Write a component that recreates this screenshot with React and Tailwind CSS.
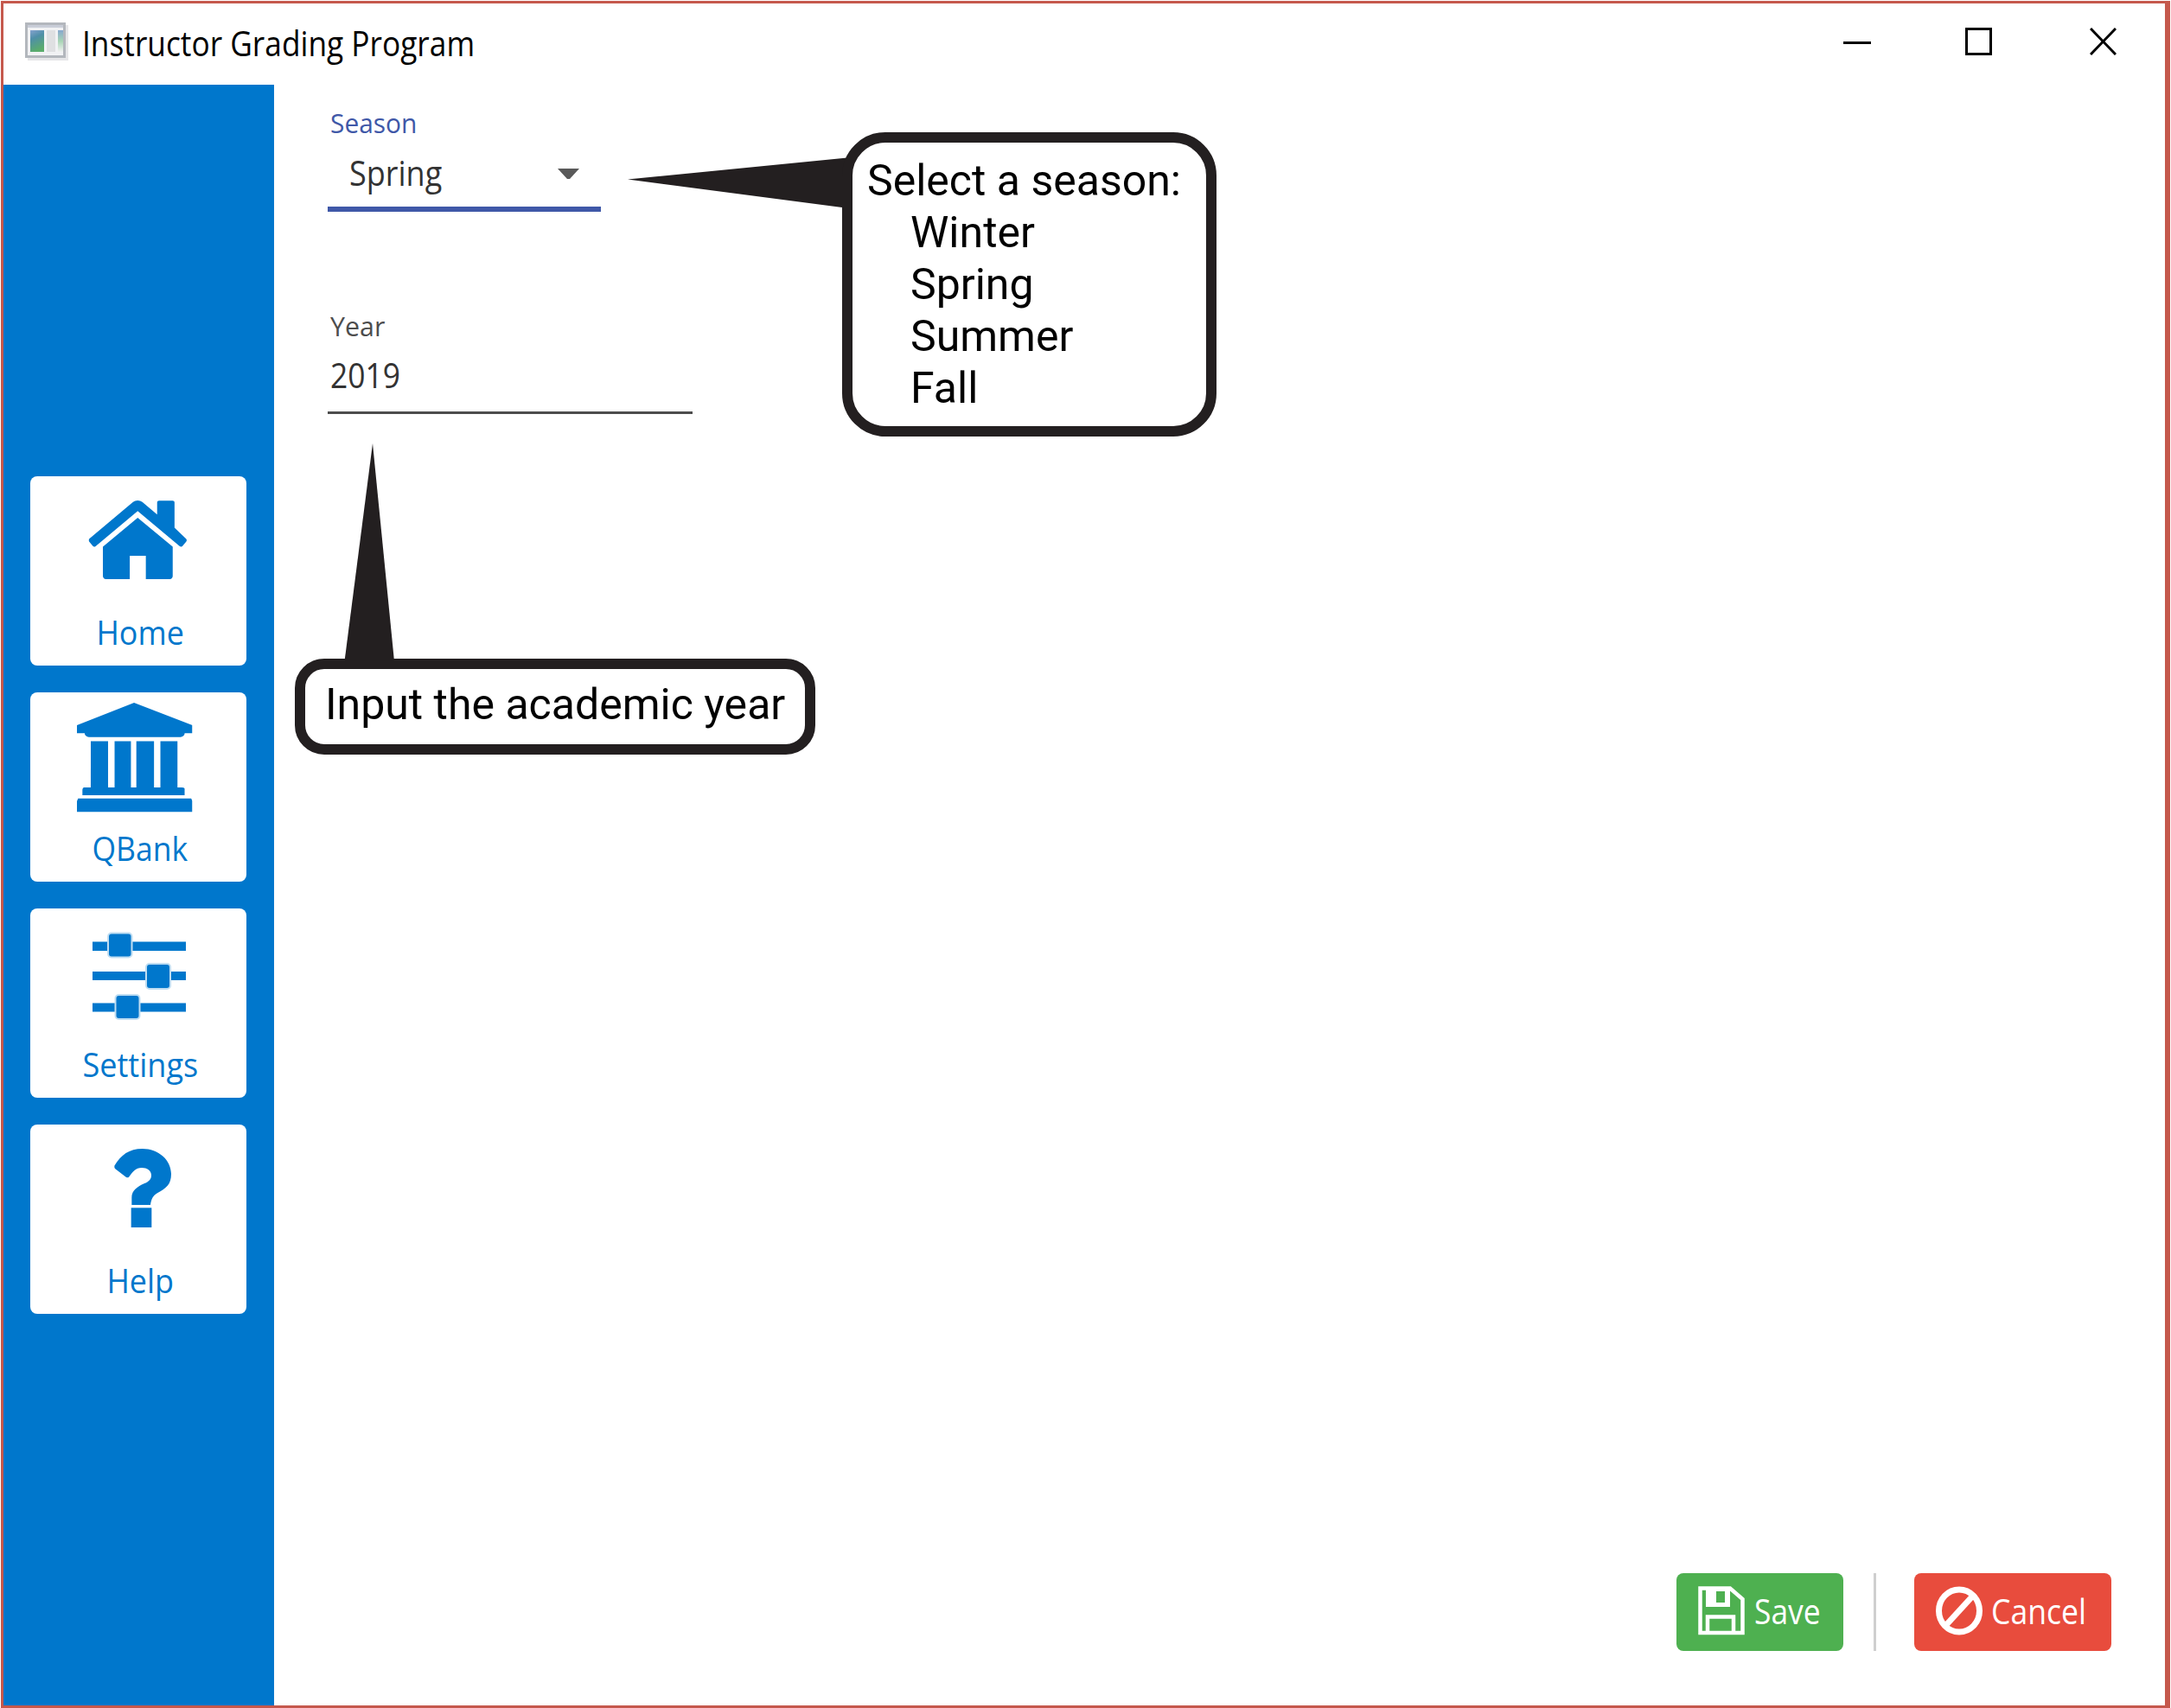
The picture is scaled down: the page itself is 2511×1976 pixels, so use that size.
import React from "react";

const UI = "font-['Open_Sans','Noto_Sans',sans-serif]";

function AppIcon() {
  return (
    <svg className="h-[45px] w-[50px] shrink-0" viewBox="0 0 50 45">
      <defs>
        <linearGradient id="pane" x1="0" y1="0" x2="0.3" y2="1">
          <stop offset="0" stopColor="#86a3cf" />
          <stop offset="0.4" stopColor="#4f8fa8" />
          <stop offset="1" stopColor="#5aac6c" />
        </linearGradient>
        <linearGradient id="side" x1="0" y1="0" x2="0" y2="1">
          <stop offset="0" stopColor="#86a8cf" />
          <stop offset="0.5" stopColor="#a8d5b5" />
          <stop offset="1" stopColor="#f1f1f1" />
        </linearGradient>
      </defs>
      <rect x="3" y="3" width="47" height="41" fill="#e6e6e8" />
      <rect x="0" y="0" width="47" height="41" fill="#b3b7bd" />
      <rect x="3" y="3" width="41" height="3" fill="#c9cdd8" />
      <rect x="3" y="6" width="41" height="32" fill="#f1f2f4" />
      <rect x="6" y="9" width="16" height="25" fill="url(#pane)" />
      <rect x="25" y="9" width="10" height="25" fill="#dfe0e2" />
      <rect x="38" y="9" width="6" height="25" fill="url(#side)" />
    </svg>
  );
}

function HomeIcon() {
  return (
    <svg x="67.500" y="28" width="113.500" height="91" viewBox="89 253 1614 1283" preserveAspectRatio="none">
      <path d="M1472 1008v480q0 20-14 34t-34 14h-394v-380h-264v380h-394q-20 0-34-14t-14-34v-480l572-474z" />
      <path d="M1695 923l-62 74q-8 9-21 11h-3q-13 0-21-7l-692-577-692 577q-12 8-24 7-13-2-21-11l-62-74q-8-10-7-23.5t11-21.5l719-599q32-26 76-26t76 26l244 204v-195q0-14 9-23t23-9h222q14 0 23 9t9 23v408l189 182q10 8 11 21.5t-7 23.5z" />
    </svg>
  );
}

function BankIcon() {
  return (
    <svg x="54" y="12" width="133.5" height="126.500" viewBox="0 0 1920 1792" preserveAspectRatio="none">
      <path d="M950 0l970 370v128h-128q0 26-20.500 45t-48.500 19h-1526q-28 0-48.500-19t-20.500-45h-128v-128z" />
      <path d="M230 630h288v758h108v-758h272v758h90v-758h294v758h106v-758h284v758h69q40 0 50 19v110h-1700v-90q0-26 20.500-39h118z" />
      <path d="M20 1570h1880l20 40v182h-1920v-182z" />
    </svg>
  );
}

function SettingsIcon() {
  return (
    <g>
      <rect x="72" y="38.500" width="108" height="10.500" />
      <rect x="72" y="73" width="108" height="10" />
      <rect x="72" y="109.500" width="108" height="10" />
      <g stroke="#bfddf2" strokeWidth="2">
        <rect x="90" y="28.500" width="27.500" height="28" rx="4" />
        <rect x="134" y="64" width="28" height="29" rx="4" />
        <rect x="98.500" y="100" width="28" height="28" rx="4" />
      </g>
    </g>
  );
}

function HelpIcon() {
  return (
    <svg x="97" y="28" width="66" height="91" viewBox="396 147 198 273" preserveAspectRatio="none">
      <path d="M397 206C420 168 448 147 494 147C550 147 594 186 594 234C594 272 576 284 546 301C530 311 525 322 522 342H457V316C457 292 478 278 500 268C518 260 525 252 525 239C525 223 510 213 492 213C470 213 462 226 447 245Q443 249 437 245L400 217Q396 213 397 206Z" />
      <rect x="455" y="352" width="71" height="68" />
    </svg>
  );
}

const NAV = [
  { label: "Home", Icon: HomeIcon, fit: "scale-x-[0.92]" },
  { label: "QBank", Icon: BankIcon, fit: "scale-x-[0.91]" },
  { label: "Settings", Icon: SettingsIcon, fit: "scale-x-[0.925]" },
  { label: "Help", Icon: HelpIcon, fit: "scale-x-[0.92]" },
];

function NavCard({ label, Icon, fit }) {
  return (
    <button className="flex h-[219px] w-[250px] flex-col items-center rounded-lg bg-white text-[#0077cc]">
      <svg className="h-[158px] w-[250px] shrink-0" viewBox="0 0 250 158" fill="currentColor">
        <Icon />
      </svg>
      <span className={`ml-[4px] mt-[2px] text-[39px] leading-[40px] ${fit}`}>{label}</span>
    </button>
  );
}

function TitleBar() {
  return (
    <header className="flex h-[94px] shrink-0 items-start pl-[25px] pr-[56px]">
      <div className="pt-[22px]">
        <AppIcon />
      </div>
      <h1 className="ml-[16px] mt-[26px] origin-left scale-x-[0.882] whitespace-nowrap text-[40px] leading-[40px] text-black">
        Instructor Grading Program
      </h1>
      <div className="ml-auto flex pt-[28px]">
        <div className="mt-[16px] h-[3px] w-[32px] bg-black" />
        <div className="ml-[109px] h-[32px] w-[31px] border-3 border-black" />
        <svg className="ml-[113px] h-[32px] w-[31px]" viewBox="0 0 31 32" stroke="#000" strokeWidth="3">
          <path d="M1 1L30 31M30 1L1 31" />
        </svg>
      </div>
    </header>
  );
}

function SaveIcon() {
  return (
    <svg className="mt-[15px] h-[57px] w-[55px] shrink-0" viewBox="0 0 55 57" fill="none" stroke="#fff">
      <path d="M2.500 2.500H37L51.500 15V54H2.500Z" strokeWidth="4.500" />
      <path d="M9 3H37V24H9ZM21 6V19H31V6Z" fill="#fff" stroke="none" fillRule="evenodd" />
      <path d="M11 54V35.500H41V54" strokeWidth="4.500" />
    </svg>
  );
}

function BanIcon() {
  return (
    <svg className="mt-[15px] h-[57px] w-[55px] shrink-0" viewBox="0 0 55 57" fill="none" stroke="#fff" strokeWidth="7">
      <ellipse cx="27" cy="28.500" rx="23.500" ry="24.500" />
      <path d="M43 11L11 46" />
    </svg>
  );
}

function Footer() {
  return (
    <footer className="mt-auto mb-[63px] mr-[62px] flex h-[90px] justify-end text-[40px] leading-[40px] text-white">
      <button className="flex w-[193px] rounded-lg bg-[#4eb050] pl-[25px]">
        <SaveIcon />
        <span className="ml-[10px] mt-[24px] origin-left scale-x-[0.885]">Save</span>
      </button>
      <div className="ml-[35px] w-[3px] bg-[#cfcfcf]" />
      <button className="ml-[44px] flex w-[228px] rounded-lg bg-[#e84c3d] pl-[25px]">
        <BanIcon />
        <span className="ml-[9px] mt-[24px] origin-left scale-x-[0.89]">Cancel</span>
      </button>
    </footer>
  );
}

function Form() {
  return (
    <div className="ml-[62px] flex flex-col items-start pt-[25px]">
      <label className="ml-[3px] h-[40px] origin-left scale-x-[0.965] text-[31px] leading-[39px] text-[#3f58a8]">
        Season
      </label>
      <div className="flex h-[82px] w-[316px] items-start border-b-6 border-[#3f58a8] pl-[25px] pr-[25px] pt-[17px]">
        <span className="origin-left scale-x-[0.9] text-[40px] leading-[40px] text-[#333333]">Spring</span>
        <svg className="ml-auto mt-[15px] h-[12px] w-[25px]" viewBox="0 0 25 12" fill="#595959">
          <path d="M0 0H25L14 12H11Z" />
        </svg>
      </div>
      <label className="ml-[3px] mt-[113px] h-[40px] origin-left scale-x-[0.98] text-[31px] leading-[39px] text-[#4d4d4d]">
        Year
      </label>
      <div className="h-[81px] w-[422px] border-b-3 border-[#4d4d4d] pl-[3px] pt-[16px]">
        <div className="w-fit origin-left scale-x-[0.885] text-[40px] leading-[40px] text-[#333333]">2019</div>
      </div>
    </div>
  );
}

function Callouts() {
  return (
    <>
      <svg className="absolute left-[726px] top-[182px] h-[60px] w-[254px]" viewBox="0 0 254 60" fill="#231f20">
        <path d="M0 25.500L254 0.500V59L248 58Z" />
      </svg>
      <div className="absolute left-[974px] top-[153px] h-[352px] w-[433px] rounded-[50px] border-12 border-[#231f20] bg-white pl-[17px] pt-[14px] font-[Roboto,sans-serif] text-[50px] leading-[60px] text-black">
        <p className="whitespace-nowrap">Select a season:</p>
        <ul className="pl-[50px]">
          <li>Winter</li>
          <li>Spring</li>
          <li>Summer</li>
          <li>Fall</li>
        </ul>
      </div>
      <svg className="absolute left-[398px] top-[513px] h-[252px] w-[58px]" viewBox="0 0 58 252" fill="#231f20">
        <path d="M33 0L58 252H0.500Z" />
      </svg>
      <div className="absolute left-[341px] top-[762px] h-[111px] w-[602px] rounded-[34px] border-12 border-[#231f20] bg-white pl-[23px] pt-[11px] font-[Roboto,sans-serif] text-[50px] leading-[60px] text-black">
        <p className="whitespace-nowrap">Input the academic year</p>
      </div>
    </>
  );
}

export default function App() {
  return (
    <div className={`relative h-[1976px] w-[2511px] overflow-hidden bg-white pl-px pr-px pt-px ${UI}`}>
      <div className="flex h-full w-full flex-col border-3 border-r-6 border-[#c5584c] bg-white">
        <TitleBar />
        <div className="flex min-h-0 flex-1">
          <nav className="flex w-[313px] shrink-0 flex-col gap-[31px] bg-[#0077cc] pl-[31px] pt-[453px]">
            {NAV.map((item) => (
              <NavCard key={item.label} {...item} />
            ))}
          </nav>
          <main className="flex flex-1 flex-col">
            <Form />
            <Footer />
          </main>
        </div>
      </div>
      <Callouts />
    </div>
  );
}
